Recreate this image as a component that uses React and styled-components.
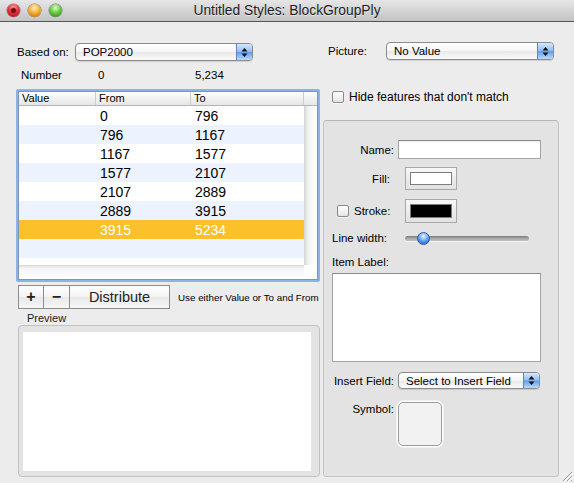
import React from 'react';
import styled, { createGlobalStyle } from 'styled-components';

const GlobalStyle = createGlobalStyle`
  html, body { margin: 0; padding: 0; background: #ececec; }
  body { font-family: "Liberation Sans", Arial, sans-serif; color: #000; }
  * { box-sizing: border-box; }
`;

const rows = [
    ['', '0', '796'],
    ['', '796', '1167'],
    ['', '1167', '1577'],
    ['', '1577', '2107'],
    ['', '2107', '2889'],
    ['', '2889', '3915'],
    ['', '3915', '5234'],
    ['', '', ''],
];
const SELECTED = 6;

function Arrows() {
    return (
        <svg width="7" height="11" viewBox="0 0 7 11">
            <path d="M0.5 4.5 L3.5 1 L6.5 4.5 Z" fill="#111" />
            <path d="M0.5 6.5 L3.5 10 L6.5 6.5 Z" fill="#111" />
        </svg>
    );
}

function PopupButton({ width, height, children }) {
    return (
        <Popup $w={width} $h={height}>
            <PopupText>{children}</PopupText>
            <PopupCap><Arrows /></PopupCap>
        </Popup>
    );
}

function App() {
    return (
        <>
            <GlobalStyle />
            <Window>
                <TitleBar>
                    <Lights>
                        <Light $kind="close" />
                        <Light $kind="min" />
                        <Light $kind="zoom" />
                    </Lights>
                    <Title>Untitled Styles: BlockGroupPly</Title>
                </TitleBar>

                <Body>
                    <LeftCol>
                        <BasedRow>
                            <FieldLabel $w={58}>Based on:</FieldLabel>
                            <PopupButton width={178}>POP2000</PopupButton>
                        </BasedRow>
                        <NumberRow>
                            <span>Number</span>
                            <span>0</span>
                            <span>5,234</span>
                        </NumberRow>

                        <TableFrame>
                            <TableInner>
                                <HeaderRow>
                                    <HeadCell>Value</HeadCell>
                                    <HeadCell>From</HeadCell>
                                    <HeadCell>To</HeadCell>
                                    <HeadCell />
                                </HeaderRow>
                                <TableBody>
                                    <Rows>
                                        {rows.map((r, idx) => (
                                            <Row key={idx} $alt={idx % 2 === 1} $selected={idx === SELECTED}>
                                                <Cell>{r[0]}</Cell>
                                                <Cell>{r[1]}</Cell>
                                                <Cell>{r[2]}</Cell>
                                            </Row>
                                        ))}
                                    </Rows>
                                    <VScroll />
                                </TableBody>
                                <HScroll>
                                    <HTrack />
                                    <Corner />
                                </HScroll>
                            </TableInner>
                        </TableFrame>

                        <ButtonRow>
                            <Segmented>
                                <SegButton $w={26}>+</SegButton>
                                <SegButton $w={27}>−</SegButton>
                                <SegButton $w={101} $big>Distribute</SegButton>
                            </Segmented>
                            <Hint>Use either Value or To and From</Hint>
                        </ButtonRow>

                        <PreviewLabel>Preview</PreviewLabel>
                        <PreviewBox>
                            <PreviewCanvas />
                        </PreviewBox>
                    </LeftCol>

                    <RightCol>
                        <PictureRow>
                            <FieldLabel $w={58}>Picture:</FieldLabel>
                            <PopupButton width={168}>No Value</PopupButton>
                        </PictureRow>
                        <HideRow>
                            <Checkbox />
                            <HideText>Hide features that don't match</HideText>
                        </HideRow>

                        <Panel>
                            <FormRow $mt={19} $h={19}>
                                <RowLabel>Name:</RowLabel>
                                <TextField $ml={4} $w={143} />
                            </FormRow>
                            <FormRow $mt={8} $h={23}>
                                <RowLabel $pr={4}>Fill:</RowLabel>
                                <ColorWell $ml={11} $h={23}>
                                    <Swatch $color="#ffffff" $h={13} />
                                </ColorWell>
                            </FormRow>
                            <FormRow $mt={9} $h={24}>
                                <RowLabel $left $pl={6}>
                                    <Checkbox />
                                    <span>Stroke:</span>
                                </RowLabel>
                                <ColorWell $ml={11} $h={24}>
                                    <Swatch $color="#000000" $h={14} />
                                </ColorWell>
                            </FormRow>
                            <FormRow $mt={8} $h={14}>
                                <RowLabel $left>Line width:</RowLabel>
                                <SliderTrack>
                                    <SliderKnob />
                                </SliderTrack>
                            </FormRow>
                            <FormRow $mt={10} $h={14}>
                                <RowLabel $left $w={120}>Item Label:</RowLabel>
                            </FormRow>
                            <TextArea />
                            <FormRow $mt={10} $h={17}>
                                <RowLabel>Insert Field:</RowLabel>
                                <PopupSlot>
                                    <PopupButton width={142} height={17}>Select to Insert Field</PopupButton>
                                </PopupSlot>
                            </FormRow>
                            <FormRow $mt={13} $h={44} $top>
                                <RowLabel $h={14}>Symbol:</RowLabel>
                                <SymbolWell />
                            </FormRow>
                        </Panel>
                    </RightCol>
                </Body>

                <Grip>
                    <svg width="12" height="12" viewBox="0 0 12 12">
                        <path d="M11 2 L2 11 M11 6 L6 11 M11 10 L10 11" stroke="#9a9a9a" strokeWidth="1" />
                        <path d="M12 3 L3 12 M12 7 L7 12" stroke="#ffffff" strokeWidth="1" />
                    </svg>
                </Grip>
            </Window>
        </>
    );
}

const Window = styled.div`
    position: relative;
    width: 574px;
    height: 483px;
    overflow: hidden;
    background: #ececec;
    display: flex;
    flex-direction: column;
`

const TitleBar = styled.div`
    flex: none;
    height: 22px;
    border-bottom: 1px solid #555;
    background: linear-gradient(#e6e6e6, #c3c3c3);
    display: grid;
    grid-template-columns: 1fr;
    align-items: center;
    & > * { grid-row: 1; grid-column: 1; }
`

const Lights = styled.div`
    justify-self: start;
    display: flex;
    gap: 8px;
    padding-left: 7px;
    padding-bottom: 1px;
`

const lightColors = {
    close: 'radial-gradient(circle at 50% 50%, #6a0a0e 0, #86121a 2px, transparent 3.5px), radial-gradient(circle at 50% 30%, #ffb3b3 0, #e5343b 45%, #a10b12 100%)',
    min: 'radial-gradient(circle at 50% 30%, #fff1c2 0, #f7ac2c 48%, #b5620a 100%)',
    zoom: 'radial-gradient(circle at 50% 30%, #e0fbc4 0, #62c83c 48%, #2a7a14 100%)',
}

const Light = styled.span`
    width: 13px;
    height: 13px;
    border-radius: 50%;
    background: ${p => lightColors[p.$kind]};
    box-shadow: 0 0 0 0.5px rgba(0, 0, 0, 0.45), 0 1px 1px rgba(255, 255, 255, 0.6);
`

const Title = styled.span`
    justify-self: center;
    font-size: 13.8px;
    color: #1d1d1d;
    text-shadow: 0 1px 0 rgba(255, 255, 255, 0.55);
    padding-bottom: 1px;
`

const Body = styled.div`
    flex: 1;
    display: grid;
    grid-template-columns: 304px 236px;
    column-gap: 3px;
    padding-left: 16px;
    align-items: start;
`

const LeftCol = styled.div`
    display: flex;
    flex-direction: column;
`

const RightCol = styled.div`
    display: flex;
    flex-direction: column;
`

const BasedRow = styled.div`
    margin-top: 21px;
    height: 18px;
    display: flex;
    align-items: center;
    padding-left: 1px;
`

const PictureRow = styled.div`
    margin-top: 20px;
    height: 18px;
    display: flex;
    align-items: center;
    padding-left: 5px;
`

const FieldLabel = styled.span`
    width: ${p => p.$w}px;
    font-size: 11.5px;
    flex: none;
`

const Popup = styled.div`
    width: ${p => p.$w}px;
    height: ${p => p.$h || 18}px;
    flex: none;
    border: 1px solid #8b8b8b;
    border-radius: 4px;
    background: linear-gradient(#ffffff, #f5f5f5 50%, #e8e8e8 52%, #fbfbfb);
    box-shadow: 0 1px 1px rgba(0, 0, 0, 0.12);
    display: flex;
    align-items: stretch;
    overflow: hidden;
`

const PopupText = styled.span`
    flex: 1;
    padding-left: 7px;
    font-size: 11.5px;
    display: flex;
    align-items: center;
    white-space: nowrap;
`

const PopupCap = styled.span`
    width: 16px;
    flex: none;
    border-left: 1px solid #5f84c0;
    background: linear-gradient(#d6e7fc, #93bdf2 48%, #5f9dec 52%, #bcdafc);
    display: flex;
    align-items: center;
    justify-content: center;
`

const NumberRow = styled.div`
    margin-top: 7px;
    height: 14px;
    display: grid;
    grid-template-columns: 77px 97px auto;
    padding-left: 5px;
    align-items: center;
    font-size: 11.5px;
`

const TableFrame = styled.div`
    margin-top: 7px;
    width: 304px;
    height: 193px;
    border: 2px solid #8db3e6;
    border-radius: 2px;
    background: #fff;
`

const TableInner = styled.div`
    height: 100%;
    border: 1px solid #7f95b2;
    display: flex;
    flex-direction: column;
`

const HeaderRow = styled.div`
    height: 14px;
    flex: none;
    display: grid;
    grid-template-columns: 77px 95px 113px 13px;
    background: linear-gradient(#ffffff, #f1f1f1 50%, #e6e6e6);
    border-bottom: 1px solid #b5b5b5;
`

const HeadCell = styled.div`
    font-size: 11px;
    line-height: 13px;
    padding-left: 3px;
    border-right: 1px solid #cdcdcd;
    &:last-child { border-right: none; }
`

const TableBody = styled.div`
    height: 159px;
    flex: none;
    display: grid;
    grid-template-columns: 285px 13px;
`

const Rows = styled.div`
    background: #fff;
`

const Row = styled.div`
    height: 19px;
    display: grid;
    grid-template-columns: 77px 95px 113px;
    align-items: center;
    background: ${p => p.$selected ? '#fbc02a' : p.$alt ? '#edf3fe' : '#ffffff'};
    color: ${p => p.$selected ? '#ffffff' : '#000000'};
`

const Cell = styled.span`
    font-size: 14px;
    padding-left: 4px;
`

const VScroll = styled.div`
    background: linear-gradient(to right, #d4d4d4, #f3f3f3 35%, #ffffff);
`

const HScroll = styled.div`
    flex: 1;
    display: grid;
    grid-template-columns: 285px 13px;
`

const HTrack = styled.div`
    background: linear-gradient(#d6d6d6, #f4f4f4 3px, #ffffff);
`

const Corner = styled.div`
    background: #fff;
`

const ButtonRow = styled.div`
    margin-top: 3px;
    height: 24px;
    display: flex;
    align-items: center;
    padding-left: 2px;
`

const Segmented = styled.div`
    display: flex;
    height: 24px;
`

const SegButton = styled.div`
    width: ${p => p.$w}px;
    height: 24px;
    margin-left: -1px;
    &:first-child { margin-left: 0; }
    border: 1px solid #8d8d8d;
    background: linear-gradient(#ffffff, #f3f3f3 50%, #e9e9e9 52%, #f6f6f6);
    display: flex;
    align-items: center;
    justify-content: center;
    font-size: ${p => p.$big ? '14.5px' : '16px'};
    font-weight: ${p => p.$big ? 'normal' : 'bold'};
    color: #222;
`

const Hint = styled.span`
    margin-left: 8px;
    font-size: 9.8px;
    white-space: nowrap;
`

const PreviewLabel = styled.div`
    margin-top: 3px;
    height: 12px;
    line-height: 12px;
    padding-left: 11px;
    font-size: 11px;
    color: #222;
`

const PreviewBox = styled.div`
    margin-top: 1px;
    margin-left: 2px;
    width: 302px;
    height: 152px;
    border: 1px solid #c1c1c1;
    border-radius: 4px;
    background: #e3e3e3;
    padding: 6px 8px 5px 4px;
`

const PreviewCanvas = styled.div`
    height: 100%;
    background: #fff;
`

const HideRow = styled.div`
    margin-top: 31px;
    height: 12px;
    display: flex;
    align-items: center;
    padding-left: 9px;
    gap: 5px;
`

const Checkbox = styled.span`
    width: 12px;
    height: 12px;
    flex: none;
    border: 1px solid #8a8a8a;
    border-radius: 2px;
    background: linear-gradient(#ffffff, #f2f2f2 50%, #e4e4e4);
    box-shadow: 0 1px 0 rgba(255, 255, 255, 0.7);
`

const HideText = styled.span`
    font-size: 12px;
    white-space: nowrap;
`

const Panel = styled.div`
    margin-top: 17px;
    height: 357px;
    border: 1px solid #c4c4c4;
    border-top-color: #b6b6b6;
    border-radius: 4px;
    background: #e3e3e3;
    padding-left: 7px;
    display: flex;
    flex-direction: column;
`

const FormRow = styled.div`
    margin-top: ${p => p.$mt}px;
    height: ${p => p.$h}px;
    flex: none;
    display: flex;
    align-items: ${p => p.$top ? 'flex-start' : 'center'};
`

const RowLabel = styled.span`
    width: ${p => p.$w || 63}px;
    height: ${p => p.$h ? `${p.$h}px` : 'auto'};
    flex: none;
    display: flex;
    align-items: center;
    justify-content: ${p => p.$left ? 'flex-start' : 'flex-end'};
    gap: 5px;
    padding-left: ${p => p.$pl || (p.$left ? 1 : 0)}px;
    padding-right: ${p => p.$pr || 0}px;
    font-size: 11.5px;
    white-space: nowrap;
`

const TextField = styled.div`
    margin-left: ${p => p.$ml}px;
    width: ${p => p.$w}px;
    height: 19px;
    background: #fff;
    border: 1px solid #a4a4a4;
    border-top-color: #8b8b8b;
    box-shadow: inset 0 1px 1px rgba(0, 0, 0, 0.08);
`

const ColorWell = styled.div`
    margin-left: ${p => p.$ml}px;
    width: 52px;
    height: ${p => p.$h}px;
    border: 1px solid #a8a8a8;
    background: linear-gradient(#f8f8f8, #ececec 50%, #e2e2e2);
    padding: 4px 4px;
    display: flex;
    align-items: center;
`

const Swatch = styled.div`
    width: 42px;
    height: ${p => p.$h}px;
    background: ${p => p.$color};
    border: 1px solid #7d7d7d;
`

const SliderTrack = styled.div`
    position: relative;
    margin-left: 11px;
    width: 124px;
    height: 5px;
    border-radius: 3px;
    background: linear-gradient(#7e7e7e, #a6a6a6 50%, #c4c4c4);
    box-shadow: 0 1px 0 rgba(255, 255, 255, 0.6);
`

const SliderKnob = styled.span`
    position: absolute;
    left: 12px;
    top: -4px;
    width: 13px;
    height: 13px;
    border-radius: 50%;
    border: 1px solid #2f5fae;
    background: radial-gradient(circle at 50% 30%, #eef5ff 0, #8bbcf6 35%, #3f86e6 65%, #2a66c9 100%);
`

const TextArea = styled.div`
    margin-top: 4px;
    margin-left: 1px;
    width: 209px;
    height: 89px;
    flex: none;
    background: #fff;
    border: 1px solid #a4a4a4;
    border-top-color: #8b8b8b;
`

const PopupSlot = styled.div`
    margin-left: 4px;
`

const SymbolWell = styled.div`
    margin-left: 4px;
    width: 44px;
    height: 44px;
    border: 1px solid #9c9c9c;
    border-radius: 5px;
    background: #f2f2f2;
    box-shadow: 0 0 0 1.5px #ffffff;
`

const Grip = styled.div`
    position: absolute;
    right: 1px;
    bottom: 1px;
    width: 12px;
    height: 12px;
    line-height: 0;
`

export default App;
